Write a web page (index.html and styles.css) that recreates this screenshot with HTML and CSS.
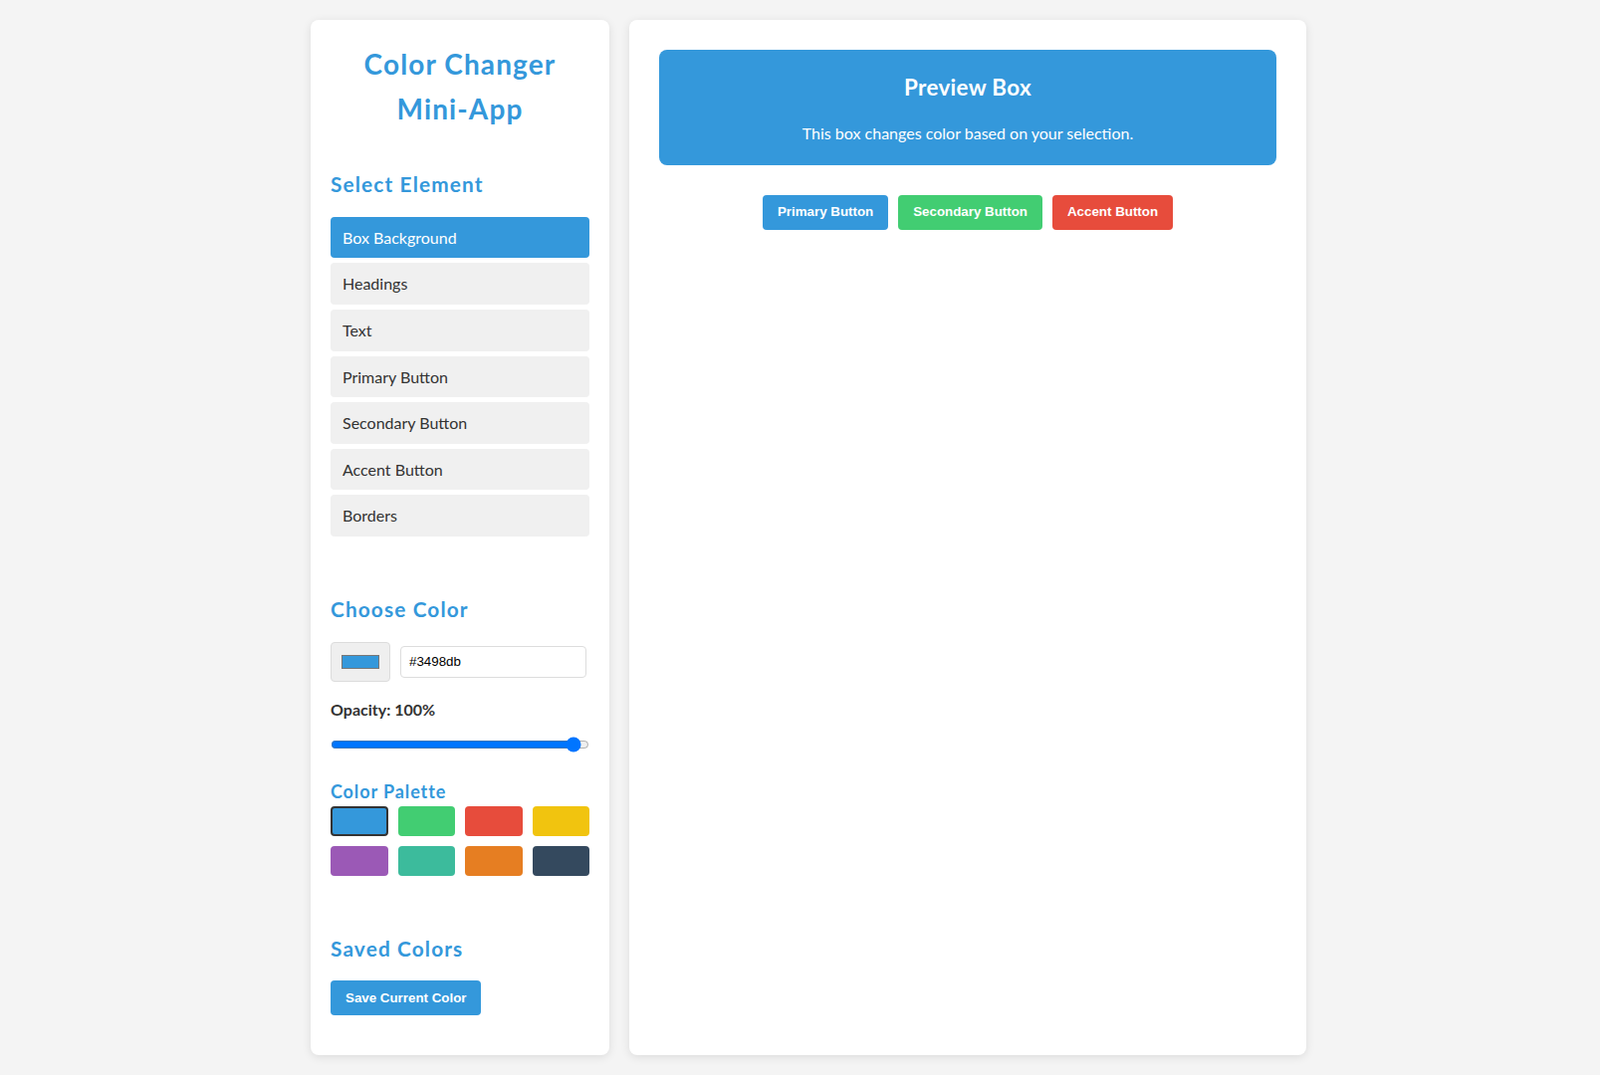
FILE: index.html
```html
<!DOCTYPE html>
<html lang="en">
<head>
<meta charset="utf-8">
<title>Color Changer Mini-App</title>
<link rel="stylesheet" href="styles.css">
</head>
<body>
<div class="app">
  <aside class="sidebar">
    <h1 class="app-title">Color Changer Mini-App</h1>

    <section class="section">
      <h2 class="section-title">Select Element</h2>
      <div class="element-list">
        <button class="element-btn active">Box Background</button>
        <button class="element-btn">Headings</button>
        <button class="element-btn">Text</button>
        <button class="element-btn">Primary Button</button>
        <button class="element-btn">Secondary Button</button>
        <button class="element-btn">Accent Button</button>
        <button class="element-btn">Borders</button>
      </div>
    </section>

    <section class="section">
      <h2 class="section-title">Choose Color</h2>
      <div class="color-row">
        <div class="color-picker"><span class="color-picker-swatch"></span></div>
        <input class="hex-input" type="text" value="#3498db">
      </div>
      <label class="opacity-label">Opacity: 100%</label>
      <input class="opacity-range" type="range" min="0" max="103.5" step="0.1" value="100">
      <h3 class="palette-title">Color Palette</h3>
      <div class="palette">
        <div class="swatch selected sw-blue"></div>
        <div class="swatch sw-green"></div>
        <div class="swatch sw-red"></div>
        <div class="swatch sw-yellow"></div>
        <div class="swatch sw-purple"></div>
        <div class="swatch sw-teal"></div>
        <div class="swatch sw-orange"></div>
        <div class="swatch sw-dark"></div>
      </div>
    </section>

    <section class="section">
      <h2 class="section-title compact">Saved Colors</h2>
      <button class="action-btn btn-primary save-btn">Save Current Color</button>
      <div class="saved-list"></div>
    </section>
  </aside>

  <main class="main">
    <div class="preview-box">
      <h3 class="preview-title">Preview Box</h3>
      <p class="preview-text">This box changes color based on your selection.</p>
    </div>
    <div class="button-row">
      <button class="action-btn btn-primary">Primary Button</button>
      <button class="action-btn btn-secondary">Secondary Button</button>
      <button class="action-btn btn-accent">Accent Button</button>
    </div>
  </main>
</div>
</body>
</html>
```

FILE: styles.css
```css
* { box-sizing: border-box; }

html, body {
  margin: 0;
  background: #f4f4f4;
}

body {
  padding: 20px 0 20px 17px;
  font-family: Lato, "Open Sans", sans-serif;
  line-height: 1.6;
  color: #333;
}

.app {
  display: flex;
  gap: 20px;
  width: 1000px;
  margin: 0 auto;
  align-items: stretch;
}

.sidebar {
  width: 300px;
  flex: none;
  background: #fff;
  border-radius: 8px;
  padding: 20px;
  box-shadow: 0 2px 10px rgba(0, 0, 0, 0.1);
}

.main {
  flex: 1;
  background: #fff;
  border-radius: 8px;
  padding: 30px;
  box-shadow: 0 2px 10px rgba(0, 0, 0, 0.1);
}

.app-title {
  margin: 0 0 36px;
  padding: 2px 30px 0;
  text-align: center;
  font-size: 28px;
  line-height: 1.6;
  font-weight: 700;
  letter-spacing: 0.04em;
  color: #3498db;
}

.section + .section { margin-top: 56px; }

.section-title {
  margin: 0 0 17px;
  font-size: 20.8px;
  line-height: 1.6;
  font-weight: 700;
  letter-spacing: 0.055em;
  color: #3498db;
}

.section-title.compact { margin-bottom: 16px; }

.element-list {
  display: flex;
  flex-direction: column;
  gap: 5px;
}

.element-btn {
  display: block;
  width: 100%;
  border: none;
  border-radius: 4px;
  background: #f0f0f0;
  color: #333;
  font-family: Lato, "Open Sans", sans-serif;
  font-size: 16px;
  line-height: 21.6px;
  padding: 10px 12px;
  text-align: left;
  cursor: pointer;
}

.element-btn.active {
  background: #3498db;
  color: #fff;
}

.color-row {
  display: flex;
  align-items: center;
  gap: 10px;
}

.color-picker {
  width: 60px;
  height: 40px;
  flex: none;
  background: #efefef;
  border: 1px solid #dcdcdc;
  border-radius: 4px;
  display: flex;
  align-items: center;
  justify-content: center;
}

.color-picker-swatch {
  display: block;
  width: 38px;
  height: 14px;
  background: #3498db;
  border: 1px solid #777;
}

.hex-input {
  width: 187px;
  height: 32px;
  margin-bottom: 1px;
  border: 1px solid #ddd;
  border-radius: 4px;
  padding: 0 8px;
  font-family: "Liberation Sans", Arial, sans-serif;
  font-size: 13.33px;
  color: #000;
  background: #fff;
}

.opacity-label {
  display: block;
  margin-top: 15px;
  font-size: 16px;
  font-weight: 700;
  color: #333;
}

.opacity-range {
  display: block;
  width: 100%;
  height: 16px;
  margin: 14px 0 0;
}

.palette-title {
  margin: 25px 0 0;
  font-size: 18px;
  line-height: 1.6;
  font-weight: 700;
  letter-spacing: 0.05em;
  color: #3498db;
}

.palette {
  display: grid;
  grid-template-columns: repeat(4, 1fr);
  gap: 10px;
}

.swatch {
  height: 30px;
  border-radius: 4px;
  cursor: pointer;
}

.swatch.selected { border: 2px solid #333; }

.sw-blue { background: #3498db; }
.sw-green { background: #42cd72; }
.sw-red { background: #e74c3c; }
.sw-yellow { background: #f1c40f; }
.sw-purple { background: #9b59b6; }
.sw-teal { background: #3cbb9c; }
.sw-orange { background: #e67e22; }
.sw-dark { background: #34495e; }

.action-btn {
  border: none;
  border-radius: 4px;
  padding: 10px 15px;
  font-family: "Liberation Sans", Arial, sans-serif;
  font-size: 13.33px;
  line-height: 14.5px;
  font-weight: 700;
  color: #fff;
  cursor: pointer;
}

.save-btn { line-height: 15px; }

.btn-primary { background: #3498db; }
.btn-secondary { background: #42cd72; }
.btn-accent { background: #e74c3c; }

.saved-list { margin-top: 20.5px; }

.preview-box {
  background: #3498db;
  border-radius: 8px;
  padding: 20px;
  text-align: center;
  color: #fff;
}

.preview-title {
  margin: 0 0 15px;
  font-size: 22.4px;
  line-height: 1.6;
  font-weight: 700;
  letter-spacing: 0.015em;
}

.preview-text {
  margin: 0;
  font-size: 16px;
}

.button-row {
  display: flex;
  justify-content: center;
  gap: 10px;
  margin-top: 30px;
}
```
